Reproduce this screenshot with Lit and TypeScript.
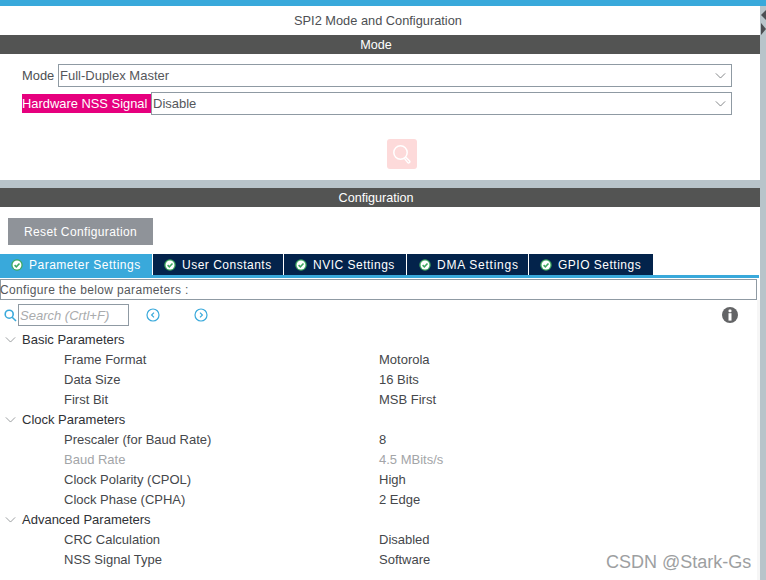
import { LitElement, html, css, svg } from 'lit';
import { customElement } from 'lit/decorators.js';

const TABS = [
  { label: 'Parameter Settings', width: 152, active: true },
  { label: 'User Constants', width: 130 },
  { label: 'NVIC Settings', width: 122 },
  { label: 'DMA Settings', width: 121, wide: true },
  { label: 'GPIO Settings', width: 124 },
];

type Row = { label: string; value?: string; group?: boolean; off?: boolean };

const ROWS: Row[] = [
  { label: 'Basic Parameters', group: true },
  { label: 'Frame Format', value: 'Motorola' },
  { label: 'Data Size', value: '16 Bits' },
  { label: 'First Bit', value: 'MSB First' },
  { label: 'Clock Parameters', group: true },
  { label: 'Prescaler (for Baud Rate)', value: '8' },
  { label: 'Baud Rate', value: '4.5 MBits/s', off: true },
  { label: 'Clock Polarity (CPOL)', value: 'High' },
  { label: 'Clock Phase (CPHA)', value: '2 Edge' },
  { label: 'Advanced Parameters', group: true },
  { label: 'CRC Calculation', value: 'Disabled' },
  { label: 'NSS Signal Type', value: 'Software' },
];

const chevron = svg`<path d="M1 1.5 L6.5 7 L12 1.5" fill="none" stroke="currentColor" stroke-width="1"/>`;

@customElement('app-root')
export class AppRoot extends LitElement {
  static styles = css`
    :host {
      display: block;
      width: 766px;
      height: 580px;
      overflow: hidden;
      position: relative;
      font-family: 'Liberation Sans', Arial, sans-serif;
      font-size: 13px;
      color: #4d4f53;
      background: #fff;
    }
    .topbar { height: 6px; background: #39a9db; }
    .body { display: flex; height: 574px; }
    .main { width: 760px; display: flex; flex-direction: column; }
    .gutter { width: 6px; background: #b8c4ca; position: relative; }
    .sash { position: absolute; left: 1px; width: 0; height: 0; border-style: solid; }
    .sash.l { top: 4px; border-width: 5px 5px 5px 0; border-color: transparent #4d4f53 transparent transparent; }
    .sash.r { top: 17px; border-width: 6px 0 6px 5px; border-color: transparent transparent transparent #4d4f53; }
    .title { height: 29px; display: flex; align-items: center; justify-content: center; padding-right: 4px; font-size: 12.8px; }
    .bar {
      height: 19px;
      background: #535453;
      color: #fff;
      display: flex;
      align-items: center;
      justify-content: center;
      font-size: 12.6px;
      padding-right: 8px;
    }
    .mode { height: 126px; padding: 10px 28px 0 22px; box-sizing: border-box; }
    .field { display: flex; align-items: center; height: 23px; margin-bottom: 5px; }
    .field label { white-space: nowrap; font-size: 12.9px; }
    .field label.plain { width: 36px; }
    .field label.alert {
      width: 129px;
      height: 19px;
      line-height: 20px;
      background: #e6007e;
      color: #fff;
    }
    .select {
      flex: 1;
      height: 23px;
      box-sizing: border-box;
      border: 1px solid #8f9aa3;
      display: flex;
      align-items: center;
      justify-content: space-between;
      padding: 0 5px 0 1px;
      color: #55575b;
    }
    .select svg { width: 11px; height: 7px; color: #6f7276; }
    .find { display: flex; justify-content: center; margin-top: 24px; padding-left: 50px; }
    .find-btn {
      width: 30px;
      height: 30px;
      border-radius: 3px;
      background: #fddada;
      display: flex;
      align-items: center;
      justify-content: center;
    }
    .band { height: 8px; background: #b8c4ca; flex: none; }
    .config { flex: 1; display: flex; flex-direction: column; min-height: 0; }
    .reset-wrap { padding: 11px 0 9px 8px; }
    .reset {
      width: 145px;
      height: 27px;
      background: #8f9399;
      color: #fff;
      display: flex;
      align-items: center;
      justify-content: center;
      font-size: 12px;
      letter-spacing: 0.37px;
    }
    .tabs { display: flex; height: 21px; gap: 1px; }
    .tab {
      box-sizing: border-box;
      background: #03234b;
      color: #fff;
      display: flex;
      align-items: center;
      gap: 6px;
      padding-left: 11px;
      font-size: 12px;
      letter-spacing: 0.5px;
      white-space: nowrap;
    }
    .tab.active { background: #39a9db; }
    .tab.wide { padding-left: 12px; letter-spacing: 0.75px; }
    .tab svg { width: 12px; height: 12px; flex: none; }
    .tab-line { height: 3px; background: #39a9db; width: 759px; margin-bottom: 1px; }
    .note {
      width: 757px;
      height: 21px;
      box-sizing: border-box;
      border: 1px solid #8f9aa3;
      display: flex;
      align-items: center;
      text-indent: -1px;
      font-size: 12px;
      letter-spacing: 0.35px;
      color: #55575b;
      white-space: nowrap;
    }
    .lower { flex: 1; border-right: 3px solid #f6f6f6; }
    .tools { display: flex; align-items: center; height: 22px; margin-top: 4px; padding-left: 4px; }
    .tools .mag { width: 13px; height: 13px; margin-right: 1px; }
    .search {
      width: 111px;
      height: 22px;
      box-sizing: border-box;
      border: 1px solid #8f9aa3;
      display: flex;
      align-items: center;
      padding-left: 1px;
      font-size: 13px;
      font-style: italic;
      color: #a9abad;
      white-space: nowrap;
    }
    .nav { width: 14px; height: 14px; flex: none; }
    .nav.first { margin-left: 17px; }
    .nav.second { margin-left: 34px; }
    .info { width: 16px; height: 16px; margin-left: auto; margin-right: 19px; }
    .tree { margin-top: 3px; }
    .row { display: flex; align-items: center; height: 20px; color: #45474b; }
    .row .twist { width: 22px; padding-left: 5px; box-sizing: border-box; flex: none; color: #8a8d90; display: flex; }
    .row .twist svg { width: 11px; height: 7px; }
    .row .name { width: 315px; margin-left: 42px; flex: none; }
    .row.group .name { color: #2f3135; margin-left: 0; width: auto; }
    .row.off { color: #a3a5a8; }
    .mark {
      position: absolute;
      left: 606px;
      top: 552px;
      font-size: 18px;
      color: #8d8f91;
      opacity: 0.85;
      white-space: nowrap;
    }
  `;

  private check() {
    return html`<svg viewBox="0 0 13 13">
      <circle cx="6.5" cy="6.5" r="6.2" fill="#3fa860"/>
      <circle cx="6.5" cy="6.5" r="4.8" fill="#fff"/>
      <path d="M3.9 6.6 L5.8 8.5 L9.2 4.8" fill="none" stroke="#3fa860" stroke-width="1.7"/>
    </svg>`;
  }

  render() {
    return html`
      <div class="topbar"></div>
      <div class="body">
        <div class="main">
          <div class="title">SPI2 Mode and Configuration</div>
          <div class="bar">Mode</div>
          <div class="mode">
            <div class="field">
              <label class="plain">Mode</label>
              <div class="select">Full-Duplex Master<svg viewBox="0 0 13 8">${chevron}</svg></div>
            </div>
            <div class="field">
              <label class="alert">Hardware NSS Signal</label>
              <div class="select">Disable<svg viewBox="0 0 13 8">${chevron}</svg></div>
            </div>
            <div class="find">
              <div class="find-btn">
                <svg width="20" height="20" viewBox="0 0 20 20" fill="none" stroke="#fff" stroke-width="1.5">
                  <circle cx="8.5" cy="8.5" r="6.7"/>
                  <path d="M13.6 13 L17.6 17 a1.2 1.2 0 0 1 -2 1.4 L12.4 14.4"/>
                </svg>
              </div>
            </div>
          </div>
          <div class="band"></div>
          <div class="bar">Configuration</div>
          <div class="config">
            <div class="reset-wrap"><div class="reset">Reset Configuration</div></div>
            <div class="tabs">
              ${TABS.map(
                (t) => html`<div class="tab ${t.active ? 'active' : ''} ${t.wide ? 'wide' : ''}" style="width:${t.width}px">${this.check()}${t.label}</div>`
              )}
            </div>
            <div class="tab-line"></div>
            <div class="note">Configure the below parameters :</div>
            <div class="lower">
              <div class="tools">
                <svg class="mag" viewBox="0 0 13 13" fill="none" stroke="#39a9db" stroke-width="1.6">
                  <circle cx="5.2" cy="5.2" r="4"/><path d="M8.2 8.2 L12 12"/>
                </svg>
                <div class="search">Search (Crtl+F)</div>
                <svg class="nav first" viewBox="0 0 14 14" fill="none" stroke="#39a9db" stroke-width="1.2">
                  <circle cx="7" cy="7" r="6"/><path d="M8 4.6 L5.6 7 L8 9.4"/>
                </svg>
                <svg class="nav second" viewBox="0 0 14 14" fill="none" stroke="#39a9db" stroke-width="1.2">
                  <circle cx="7" cy="7" r="6"/><path d="M6 4.6 L8.4 7 L6 9.4"/>
                </svg>
                <svg class="info" viewBox="0 0 16 16">
                  <circle cx="8" cy="8" r="8" fill="#636466"/>
                  <rect x="6.5" y="2.6" width="3" height="2.6" rx="1" fill="#fff"/>
                  <rect x="6.5" y="6.2" width="3" height="7.4" fill="#fff"/>
                </svg>
              </div>
              <div class="tree">
                ${ROWS.map((r) =>
                  r.group
                    ? html`<div class="row group">
                        <span class="twist"><svg viewBox="0 0 13 8">${chevron}</svg></span>
                        <span class="name">${r.label}</span>
                      </div>`
                    : html`<div class="row ${r.off ? 'off' : ''}">
                        <span class="twist"></span>
                        <span class="name">${r.label}</span>
                        <span>${r.value}</span>
                      </div>`
                )}
              </div>
            </div>
          </div>
        </div>
        <div class="gutter"><div class="sash l"></div><div class="sash r"></div></div>
      </div>
      <div class="mark">CSDN @Stark-Gs</div>
    `;
  }
}
